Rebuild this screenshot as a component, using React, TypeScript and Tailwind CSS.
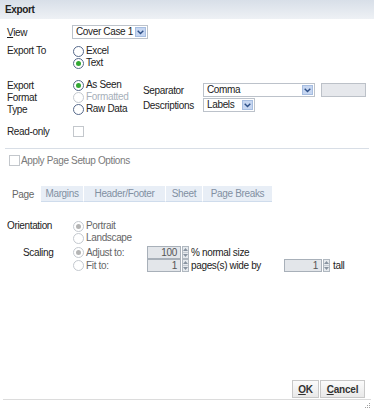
import React from 'react';

function Radio({ checked = false, disabled = false }: { checked?: boolean; disabled?: boolean }) {
  return (
    <span
      className={`inline-flex w-[11px] h-[11px] rounded-full border bg-white items-center justify-center shrink-0 ${
        disabled ? 'border-[#c4c9cf]' : 'border-[#56698a]'
      }`}
    >
      {checked && (
        <span className={`w-[5px] h-[5px] rounded-full ${disabled ? 'bg-[#b4b4b4]' : 'bg-[#33a833]'}`} />
      )}
    </span>
  );
}

function RadioRow({
  label,
  checked = false,
  disabled = false,
  textClass = 'text-[#222]',
  h = 'h-[12px]',
}: {
  label: string;
  checked?: boolean;
  disabled?: boolean;
  textClass?: string;
  h?: string;
}) {
  return (
    <div className={`flex items-center gap-[2px] pl-[1px] ${h}`}>
      <Radio checked={checked} disabled={disabled} />
      <span className={`leading-none ${textClass}`}>{label}</span>
    </div>
  );
}

function Check() {
  return <span className="inline-block w-[11px] h-[11px] border border-[#c3c7cc] bg-white shrink-0" />;
}

function Chevron() {
  return (
    <svg width="7" height="5" viewBox="0 0 7 5">
      <path d="M0.7 0.8 L3.5 3.6 L6.3 0.8" fill="none" stroke="#2d4f87" strokeWidth="1.4" />
    </svg>
  );
}

function SelectBox({ text, className }: { text: string; className: string }) {
  return (
    <div className={`flex items-center h-[14px] border border-[#bcc2ca] bg-white pl-[3px] pr-[1px] ${className}`}>
      <span className="flex-1 truncate leading-none">{text}</span>
      <span className="w-[11px] h-[10px] bg-[#c6d6f1] border border-[#a6bde0] flex items-center justify-center">
        <Chevron />
      </span>
    </div>
  );
}

function Spinner({ value, className }: { value: string; className: string }) {
  return (
    <div className="flex items-center shrink-0">
      <div
        className={`h-[13px] border border-[#a8b0b9] bg-[#e3e6ea] text-right pr-[3px] text-[#555] leading-[11px] ${className}`}
      >
        {value}
      </div>
      <div className="w-[7px] h-[13px] flex flex-col ml-[1px] border border-[#b0b8c0] bg-[#e6eaee]">
        <span className="flex-1 flex items-center justify-center border-b border-[#c4cad1]">
          <svg width="5" height="3" viewBox="0 0 5 3">
            <path d="M0 3 L2.5 0 L5 3Z" fill="#8893a0" />
          </svg>
        </span>
        <span className="flex-1 flex items-center justify-center">
          <svg width="5" height="3" viewBox="0 0 5 3">
            <path d="M0 0 L2.5 3 L5 0Z" fill="#8893a0" />
          </svg>
        </span>
      </div>
    </div>
  );
}

export default function App() {
  return (
    <div className="w-[374px] h-[411px] flex flex-col bg-white font-['Liberation_Sans',Arial,sans-serif] text-[10px] tracking-[-0.35px] text-[#222] overflow-hidden">
      {/* Title bar */}
      <div className="h-[19px] shrink-0 flex items-center pl-[5px] bg-gradient-to-b from-[#d8dfe8] to-[#eef1f5] font-bold text-[#222]">
        Export
      </div>

      <div className="px-[7px] flex flex-col">
        {/* View */}
        <div className="flex mt-[6px] h-[14px] items-center">
          <div className="w-[65px]">
            <span className="underline">V</span>iew
          </div>
          <SelectBox text="Cover Case 1" className="w-[76px]" />
        </div>

        {/* Export To */}
        <div className="flex mt-[6px]">
          <div className="w-[65px] h-[12px] leading-[12px]">Export To</div>
          <div className="flex flex-col">
            <RadioRow label="Excel" />
            <RadioRow label="Text" checked />
          </div>
        </div>

        {/* Export Format Type */}
        <div className="flex mt-[10px]">
          <div className="w-[65px] flex flex-col leading-[12px] mt-[1px]">
            <span>Export</span>
            <span>Format</span>
            <span>Type</span>
          </div>
          <div className="w-[71px] flex flex-col">
            <RadioRow label="As Seen" checked />
            <RadioRow label="Formatted" disabled textClass="text-[#a7b0ba]" />
            <RadioRow label="Raw Data" />
          </div>
          <div className="flex flex-col mt-[4px] gap-[1px]">
            <div className="flex items-center h-[14px]">
              <span className="w-[60px]">Separator</span>
              <SelectBox text="Comma" className="w-[112px]" />
              <span className="ml-[6px] w-[45px] h-[14px] bg-[#e6e8ec] border border-[#bcc1c8]" />
            </div>
            <div className="flex items-center h-[14px]">
              <span className="w-[60px]">Descriptions</span>
              <SelectBox text="Labels" className="w-[52px]" />
            </div>
          </div>
        </div>

        {/* Read-only */}
        <div className="flex mt-[9px] h-[12px] items-center">
          <div className="w-[66px]">Read-only</div>
          <Check />
        </div>

        {/* Separator line */}
        <div className="mt-[11px] -mx-[2px] border-t border-[#d8dee6]" />

        {/* Apply Page Setup */}
        <div className="flex mt-[5px] h-[12px] items-center pl-[2px] gap-[1px]">
          <Check />
          <span className="text-[#7a7a7a]">Apply Page Setup Options</span>
        </div>

        {/* Tabs */}
        <div className="mt-[20px] -mx-[2px] flex h-[16px] text-[#8290a2]">
          <div className="w-[36px] flex items-center justify-center bg-white text-[#666]">Page</div>
          <div className="w-[42px] flex items-center justify-center bg-[#e8eef6] border-b border-[#cfdcec]">
            Margins
          </div>
          <div className="w-[82px] flex items-center justify-center bg-[#e8eef6] border-b border-l border-[#cfdcec] border-l-white">
            Header/Footer
          </div>
          <div className="w-[37px] flex items-center justify-center bg-[#e8eef6] border-b border-l border-[#cfdcec] border-l-white">
            Sheet
          </div>
          <div className="w-[70px] flex items-center justify-center bg-[#e8eef6] border-b border-l border-[#cfdcec] border-l-white">
            Page Breaks
          </div>
        </div>

        {/* Orientation */}
        <div className="flex mt-[18px]">
          <div className="w-[65px] h-[12px] leading-[12px]">Orientation</div>
          <div className="flex flex-col">
            <RadioRow label="Portrait" checked disabled textClass="text-[#666]" />
            <RadioRow label="Landscape" disabled textClass="text-[#666]" />
          </div>
        </div>

        {/* Scaling */}
        <div className="flex mt-[2px]">
          <div className="w-[65px] h-[13px] leading-[13px] pl-[16px]">Scaling</div>
          <div className="flex flex-col">
            <div className="flex items-center h-[13px]">
              <div className="w-[75px]">
                <RadioRow label="Adjust to:" checked disabled textClass="text-[#666]" h="h-[13px]" />
              </div>
              <Spinner value="100" className="w-[34px]" />
              <span className="ml-[2px]">% normal size</span>
            </div>
            <div className="flex items-center h-[13px]">
              <div className="w-[75px]">
                <RadioRow label="Fit to:" disabled textClass="text-[#666]" h="h-[13px]" />
              </div>
              <Spinner value="1" className="w-[34px]" />
              <span className="ml-[2px] w-[93px]">pages(s) wide by</span>
              <Spinner value="1" className="w-[38px]" />
              <span className="ml-[3px]">tall</span>
            </div>
          </div>
        </div>
      </div>

      <div className="flex-1" />

      {/* Buttons */}
      <div className="flex justify-end gap-[1px] pr-[9px] h-[18px] shrink-0">
        <button className="w-[27px] h-[18px] border border-[#c8c8c8] bg-gradient-to-b from-[#fbfbfb] to-[#e9e9e9] font-bold text-[#333] tracking-[-0.2px]">
          <span className="underline">O</span>K
        </button>
        <button className="w-[45px] h-[18px] border border-[#c8c8c8] bg-gradient-to-b from-[#fbfbfb] to-[#e9e9e9] font-bold text-[#333] tracking-[-0.2px]">
          <span className="underline">C</span>ancel
        </button>
      </div>
      <div className="mt-[1px] mx-[3px] border-t border-[#dcdcdc] shrink-0" />
      <div className="h-[11px] shrink-0 flex justify-end items-center pr-[3px]">
        <svg width="6" height="6" viewBox="0 0 6 6">
          <rect x="4" y="0" width="1" height="1" fill="#a0a0a0" />
          <rect x="2" y="2" width="1" height="1" fill="#a0a0a0" />
          <rect x="4" y="2" width="1" height="1" fill="#a0a0a0" />
          <rect x="0" y="4" width="1" height="1" fill="#a0a0a0" />
          <rect x="2" y="4" width="1" height="1" fill="#a0a0a0" />
          <rect x="4" y="4" width="1" height="1" fill="#a0a0a0" />
        </svg>
      </div>
    </div>
  );
}
